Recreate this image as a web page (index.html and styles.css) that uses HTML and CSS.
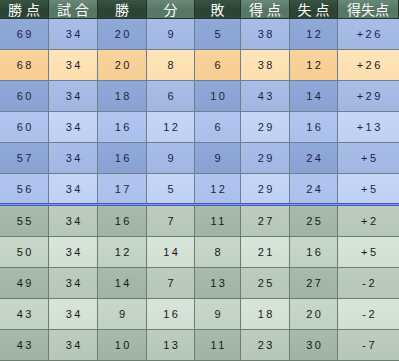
FILE: index.html
```html
<!DOCTYPE html>
<html lang="ja">
<head>
<meta charset="utf-8">
<link rel="stylesheet" href="styles.css">
</head>
<body>
<div class="table">
  <div class="row head">
    <div class="c sp">勝点</div><div class="c sp">試合</div><div class="c">勝</div><div class="c">分</div><div class="c">敗</div><div class="c sp">得点</div><div class="c sp">失点</div><div class="c">得失点</div>
  </div>
  <div class="row blue-d"><div class="c">69</div><div class="c">34</div><div class="c">20</div><div class="c">9</div><div class="c">5</div><div class="c">38</div><div class="c">12</div><div class="c">+26</div></div>
  <div class="row orange"><div class="c">68</div><div class="c">34</div><div class="c">20</div><div class="c">8</div><div class="c">6</div><div class="c">38</div><div class="c">12</div><div class="c">+26</div></div>
  <div class="row blue-d"><div class="c">60</div><div class="c">34</div><div class="c">18</div><div class="c">6</div><div class="c">10</div><div class="c">43</div><div class="c">14</div><div class="c">+29</div></div>
  <div class="row blue-l"><div class="c">60</div><div class="c">34</div><div class="c">16</div><div class="c">12</div><div class="c">6</div><div class="c">29</div><div class="c">16</div><div class="c">+13</div></div>
  <div class="row blue-d"><div class="c">57</div><div class="c">34</div><div class="c">16</div><div class="c">9</div><div class="c">9</div><div class="c">29</div><div class="c">24</div><div class="c">+5</div></div>
  <div class="row blue-l last-top"><div class="c">56</div><div class="c">34</div><div class="c">17</div><div class="c">5</div><div class="c">12</div><div class="c">29</div><div class="c">24</div><div class="c">+5</div></div>
  <div class="divider"></div>
  <div class="row green-d"><div class="c">55</div><div class="c">34</div><div class="c">16</div><div class="c">7</div><div class="c">11</div><div class="c">27</div><div class="c">25</div><div class="c">+2</div></div>
  <div class="row green-l"><div class="c">50</div><div class="c">34</div><div class="c">12</div><div class="c">14</div><div class="c">8</div><div class="c">21</div><div class="c">16</div><div class="c">+5</div></div>
  <div class="row green-d"><div class="c">49</div><div class="c">34</div><div class="c">14</div><div class="c">7</div><div class="c">13</div><div class="c">25</div><div class="c">27</div><div class="c">-2</div></div>
  <div class="row green-l"><div class="c">43</div><div class="c">34</div><div class="c">9</div><div class="c">16</div><div class="c">9</div><div class="c">18</div><div class="c">20</div><div class="c">-2</div></div>
  <div class="row green-d"><div class="c">43</div><div class="c">34</div><div class="c">10</div><div class="c">13</div><div class="c">11</div><div class="c">23</div><div class="c">30</div><div class="c">-7</div></div>
</div>
</body>
</html>
```

FILE: styles.css
```css
html, body {
  margin: 0;
  padding: 0;
  background: #ffffff;
}

.table {
  width: 399px;
  display: flex;
  flex-direction: column;
}

.row {
  display: grid;
  grid-template-columns: 49px 49px 49px 48px 46px 49px 48px 1fr;
  height: 31px;
  box-sizing: border-box;
  border-bottom: 1px solid #6f7e90;
}

.c {
  box-sizing: border-box;
  border-right: 1px solid #6f7e90;
  display: flex;
  align-items: center;
  justify-content: center;
  font-family: "Liberation Sans", Arial, sans-serif;
  font-size: 11px;
  letter-spacing: 2.5px;
  padding-left: 2.5px;
  color: #1b1f4e;
}

.c:last-child {
  border-right: none;
}

/* header */
.head {
  height: 19px;
  border-bottom: 1px solid #24382c;
}

.head .c {
  font-family: "Noto Sans CJK JP", "Noto Sans", sans-serif;
  font-size: 14px;
  letter-spacing: 0;
  padding-left: 0;
  color: #ffffff;
  border-right: 1px solid #1f3327;
  line-height: 1;
}

.head .c.sp {
  letter-spacing: 4px;
  padding-left: 4px;
}

.head .c:nth-child(odd) {
  background: linear-gradient(#3a5444, #2a4334 55%, #2c4536);
}

.head .c:nth-child(even) {
  background: linear-gradient(#6a8877, #577565 55%, #5a7868);
}

/* blue dark */
.blue-d .c:nth-child(odd) {
  background: linear-gradient(#90a9d8, #8aa2d1);
}
.blue-d .c:nth-child(even) {
  background: linear-gradient(#a8bde7, #a1b6e0);
}

/* blue light */
.blue-l .c:nth-child(odd) {
  background: linear-gradient(#b1c5ef, #aabfea);
}
.blue-l .c:nth-child(even) {
  background: linear-gradient(#c6d6f7, #bfd0f3);
}

/* orange */
.orange .c:nth-child(odd) {
  background: linear-gradient(#f9d39c, #f6cd92);
}
.orange .c:nth-child(even) {
  background: linear-gradient(#fee5b9, #fcdeaf);
}
.orange .c {
  color: #1c1c2c;
}

.last-top {
  height: 29px;
  border-bottom: none;
}

.divider {
  height: 3px;
  background: linear-gradient(#2236a8, #8597e6 50%, #2a3eb4);
}

/* green */
.green-d,
.green-l {
  border-bottom-color: #6d7d70;
}
.green-d .c,
.green-l .c {
  color: #151815;
  border-right-color: #6d7d70;
}

.green-d .c:nth-child(odd) {
  background: linear-gradient(#a7bbaa, #a0b4a4);
}
.green-d .c:nth-child(even) {
  background: linear-gradient(#bccdbf, #b5c7b8);
}

.green-l .c:nth-child(odd) {
  background: linear-gradient(#c7d7ca, #c0d1c4);
}
.green-l .c:nth-child(even) {
  background: linear-gradient(#d8e5da, #d1dfd3);
}
```
